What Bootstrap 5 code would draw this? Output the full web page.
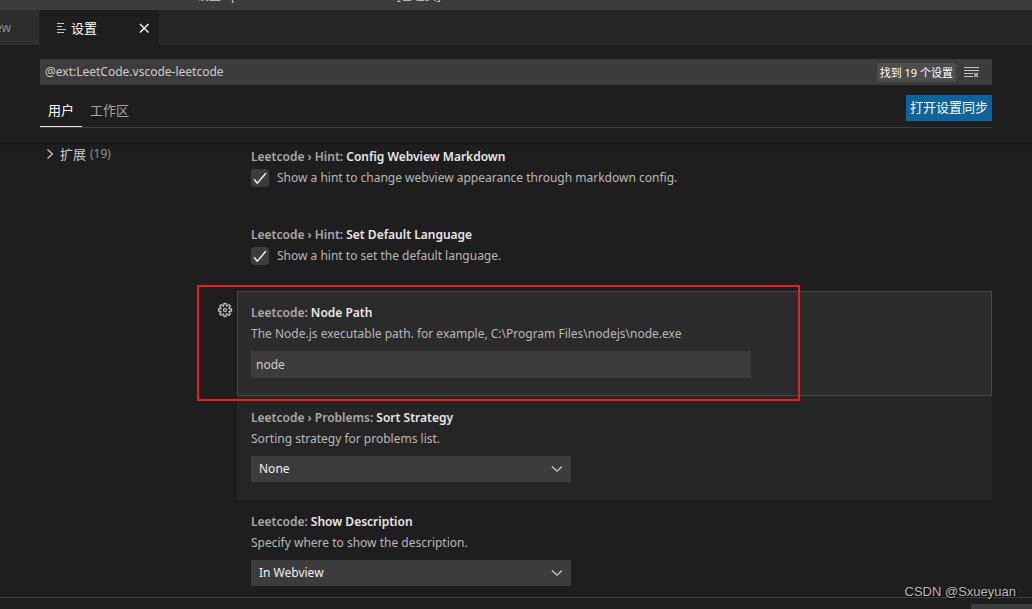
<!DOCTYPE html>
<html lang="zh-CN" data-bs-theme="dark">
<head>
<meta charset="utf-8">
<meta name="viewport" content="width=device-width, initial-scale=1">
<title>设置</title>
<link href="https://cdn.jsdelivr.net/npm/bootstrap@5.3.0/dist/css/bootstrap.min.css" rel="stylesheet">
<style>
  body { background: #1e1e1e; color: #ccc; font: 12px/18px "Noto Sans", "Noto Sans CJK SC", sans-serif; }
  .cjk { font-size: 13px; }
  .gutter { padding-left: 40px; padding-right: 40px; }

  .title-bar { background: #3c3c3c; height: 10px; }
  .title-text { line-height: 28px; padding-left: 197px; white-space: pre; }

  .tab-strip { background: #252526; height: 35px; }
  .editor-tab { background: #2d2d2d; color: #8f8f8f; width: 39px; margin-right: 1px; padding-right: 28px; }
  .editor-tab.active { background: #1e1e1e; color: #fff; width: 119px; padding: 0 8px 0 14px; }
  .plain-btn { background: none; border: 0; padding: 0; color: inherit; line-height: 0; }

  .search-row { background: #3c3c3c; height: 26px; margin-top: 14px; padding-right: 13px; }
  .field, .field:focus { background: #3c3c3c; color: #ccc; border: 0; border-radius: 0; box-shadow: none; font-size: 12px; line-height: 18px; padding: 4px 5px; }
  .found { background: #4d4d4d; color: #fff; border-radius: 2px; font-size: 11px; line-height: 19px; padding: 0 3px; }

  .scope-row { border-bottom: 1px solid #3c3c3c; margin-top: 10px; height: 33px; }
  .scope-row .nav-link { color: #a6a6a6; font-size: 13px; line-height: 18px; padding: 6px 8px 8px; border-bottom: 1px solid transparent; }
  .scope-row .nav-link.active { color: #fff; border-color: #e7e7e7; }
  .sync-btn { background: #0e639c; color: #fff; border: 0; border-radius: 0; font-size: 13px; line-height: 18px; padding: 3px 4px 5px; height: 26px; }
  .scroll-edge { height: 3px; margin-top: 14px; background: linear-gradient(#141414, #1b1b1b); }

  .toc { width: 197px; padding-left: 4px; }
  .toc a { color: #ccc; }
  .dim { color: #8f8f8f; }

  .setting { padding: 13px 14px 18px; }
  .setting.clipped { padding-top: 3px; }
  .setting.focused { background: #2b2b2c; border: 1px solid #474747; padding: 12px 13px 17px; }
  .setting.hovered { background: #252526; }
  .setting h2 { font-size: 12px; line-height: 18px; font-weight: 600; color: #a9a9a9; margin: 0 0 3px; }
  .setting h2 b { color: #e7e7e7; font-weight: 600; }
  .desc { color: #b8b8b8; margin: 0 0 8px; }
  .setting .field { max-width: 500px; }
  .setting .field.path { height: 27px; }
  .tick { width: 18px; height: 18px; margin: 0 8px 0 0; border-radius: 3px; border: 0; flex: none; }
  .tick, .tick:checked { background-color: #3c3c3c; }
  .tick:checked { background-image: url("data:image/svg+xml,%3Csvg xmlns='http://www.w3.org/2000/svg' viewBox='0 0 18 18'%3E%3Cpath d='M3 10.2l3.3 4L15 4' fill='none' stroke='%23f0f0f0' stroke-width='1.5'/%3E%3C/svg%3E"); background-size: 18px; }
  .choice { max-width: 320px; height: 26px; border: 0; border-radius: 0; color: #f0f0f0; font-size: 12px; line-height: 18px; padding: 4px 30px 4px 8px;
    background: #3c3c3c url("data:image/svg+xml,%3Csvg xmlns='http://www.w3.org/2000/svg' width='12' height='8' viewBox='0 0 12 8'%3E%3Cpath d='M1 1.5l5 4.7 5-4.7' fill='none' stroke='%23ccc' stroke-width='1.2'/%3E%3C/svg%3E") no-repeat right 8px center / 12px 8px; }
  .gear { position: absolute; left: -21px; top: 10px; }
  .callout { position: absolute; left: -41px; top: -7px; bottom: -6px; right: 191px; border: 2px solid #ed1c24; z-index: 2; pointer-events: none; }

  .bottom-panel { border-top: 1px solid #414141; height: 12px; }
  .bottom-box { background: #3c3c3c; width: 61px; height: 5px; }
  .watermark { position: absolute; right: 16px; bottom: 7px; font: 13px/20px "Liberation Sans", sans-serif; color: #b9b9b9; text-shadow: 1px 1px 1px #000; }
</style>
</head>
<body class="vh-100 d-flex flex-column overflow-hidden position-relative">

<header class="title-bar d-flex align-items-end overflow-hidden flex-shrink-0">
  <div class="title-text">设置 - problem - Visual Studio Code [管理员]</div>
</header>

<div class="tab-strip d-flex flex-shrink-0">
  <div class="editor-tab d-flex align-items-center justify-content-end overflow-hidden"><span>ew</span></div>
  <div class="editor-tab active d-flex align-items-center">
    <svg class="me-1" width="13" height="14" viewBox="0 0 13 14" stroke="#c5c5c5" fill="none"><path d="M3 2.500h7M3 5.500h5M3 8.500h9M3 11.500h7"/></svg>
    <span class="cjk flex-grow-1">设置</span>
    <button type="button" class="plain-btn" aria-label="关闭"><svg width="14" height="14" viewBox="0 0 14 14" stroke="#fff" stroke-width="1.4"><path d="M3 3l8.500 8.500M11.500 3L3 11.500"/></svg></button>
  </div>
</div>

<div class="gutter flex-shrink-0">
  <div class="search-row d-flex align-items-center">
    <input class="form-control field flex-grow-1" type="text" aria-label="搜索设置" value="@ext:LeetCode.vscode-leetcode">
    <span class="found text-nowrap me-2">找到 19 个设置</span>
    <button type="button" class="plain-btn" aria-label="清除"><svg width="15" height="14" viewBox="0 0 15 14" stroke="#c5c5c5" fill="none"><path d="M0 2.500h15M0 5.500h15M0 8.500h9M0 11.500h9"/><path d="M10 8l4 4M14 8l-4 4" stroke-width="1.300"/></svg></button>
  </div>
  <div class="scope-row d-flex justify-content-between">
    <nav class="nav flex-nowrap">
      <a class="nav-link active" href="#">用户</a>
      <a class="nav-link" href="#">工作区</a>
    </nav>
    <button type="button" class="btn sync-btn text-nowrap">打开设置同步</button>
  </div>
</div>
<div class="scroll-edge flex-shrink-0"></div>

<div class="gutter d-flex flex-grow-1 overflow-hidden">
  <nav class="toc flex-shrink-0">
    <a class="d-flex align-items-center text-decoration-none" href="#">
      <svg class="me-1" width="12" height="12" viewBox="0 0 12 12" stroke="#ccc" stroke-width="1.2" fill="none"><path d="M3.5 1.5L8.5 6l-5 4.5"/></svg>
      <span class="cjk">扩展</span><span class="dim ms-1">(19)</span>
    </a>
  </nav>
  <main class="flex-grow-1">
    <section class="setting clipped">
      <h2>Leetcode › Hint: <b>Config Webview Markdown</b></h2>
      <div class="d-flex">
        <input class="form-check-input tick" type="checkbox" id="markdownHint" checked>
        <label class="desc" for="markdownHint">Show a hint to change webview appearance through markdown config.</label>
      </div>
    </section>
    <section class="setting">
      <h2>Leetcode › Hint: <b>Set Default Language</b></h2>
      <div class="d-flex">
        <input class="form-check-input tick" type="checkbox" id="languageHint" checked>
        <label class="desc" for="languageHint">Show a hint to set the default language.</label>
      </div>
    </section>
    <section class="setting focused position-relative">
      <button type="button" class="plain-btn gear" aria-label="更多操作"><svg width="16" height="16" viewBox="0 0 16 16" fill="#c5c5c5" stroke="#c5c5c5" stroke-width=".3" fill-rule="evenodd"><path d="M9.1 4.4L8.6 2H7.4l-.5 2.4-.7.3-2-1.3-.9.8 1.3 2-.2.7-2.4.5v1.2l2.4.5.3.8-1.3 2 .8.8 2-1.3.8.3.4 2.3h1.2l.5-2.4.8-.3 2 1.3.8-.8-1.3-2 .3-.8 2.3-.4V7.4l-2.4-.5-.3-.8 1.3-2-.8-.8-2 1.3-.7-.2zM9.4 1l.5 2.4L12 2.1l2 2-1.4 2.1 2.4.4v2.8l-2.4.5L14 12l-2 2-2.1-1.4-.5 2.4H6.6l-.5-2.4L4 13.9l-2-2 1.4-2.1L1 9.4V6.6l2.4-.5L2.1 4l2-2 2.1 1.4.4-2.4h2.8zm.6 7c0 1.1-.9 2-2 2s-2-.9-2-2 .9-2 2-2 2 .9 2 2zM8 9c.6 0 1-.4 1-1s-.4-1-1-1-1 .4-1 1 .4 1 1 1z"/></svg></button>
      <h2>Leetcode: <b>Node Path</b></h2>
      <label class="desc d-block" for="nodePath">The Node.js executable path. for example, C:\Program Files\nodejs\node.exe</label>
      <input class="form-control field path" type="text" id="nodePath" value="node">
      <div class="callout"></div>
    </section>
    <section class="setting hovered">
      <h2>Leetcode › Problems: <b>Sort Strategy</b></h2>
      <label class="desc d-block" for="sortStrategy">Sorting strategy for problems list.</label>
      <select class="form-select choice" id="sortStrategy"><option>None</option></select>
    </section>
    <section class="setting">
      <h2>Leetcode: <b>Show Description</b></h2>
      <label class="desc d-block" for="showDescription">Specify where to show the description.</label>
      <select class="form-select choice" id="showDescription"><option>In Webview</option></select>
    </section>
  </main>
</div>

<footer class="bottom-panel d-flex align-items-end justify-content-end flex-shrink-0"><div class="bottom-box"></div></footer>
<div class="watermark">CSDN @Sxueyuan</div>

<script src="https://cdn.jsdelivr.net/npm/bootstrap@5.3.0/dist/js/bootstrap.bundle.min.js"></script>
</body>
</html>
